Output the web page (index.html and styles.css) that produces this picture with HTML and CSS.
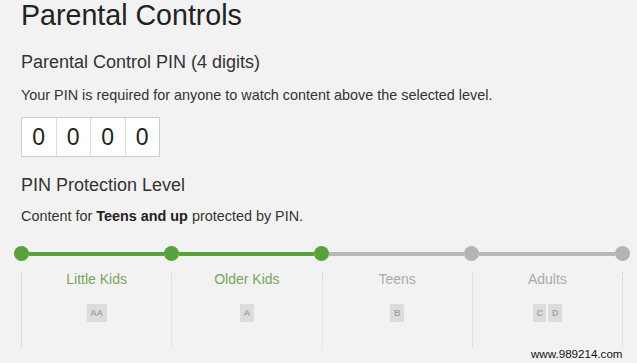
FILE: index.html
```html
<!DOCTYPE html>
<html>
<head>
<meta charset="utf-8">
<link rel="stylesheet" href="styles.css">
</head>
<body>
<div class="page">
  <h1 class="title">Parental Controls</h1>
  <h2 class="subhead first">Parental Control PIN (4 digits)</h2>
  <p class="desc first">Your PIN is required for anyone to watch content above the selected level.</p>
  <div class="pin">
    <div class="cell">0</div>
    <div class="cell">0</div>
    <div class="cell">0</div>
    <div class="cell">0</div>
  </div>
  <h2 class="subhead second">PIN Protection Level</h2>
  <p class="desc second">Content for <b>Teens and up</b> protected by PIN.</p>
  <div class="slider">
    <span class="dot on"></span>
    <span class="seg on"></span>
    <span class="dot on"></span>
    <span class="seg on"></span>
    <span class="dot on"></span>
    <span class="seg"></span>
    <span class="dot"></span>
    <span class="seg"></span>
    <span class="dot"></span>
  </div>
  <div class="levels">
    <div class="level solid on">
      <div class="label">Little Kids</div>
      <div class="badges"><span class="badge">AA</span></div>
    </div>
    <div class="level dotted on">
      <div class="label">Older Kids</div>
      <div class="badges"><span class="badge">A</span></div>
    </div>
    <div class="level dotted">
      <div class="label">Teens</div>
      <div class="badges"><span class="badge">B</span></div>
    </div>
    <div class="level solid last">
      <div class="label">Adults</div>
      <div class="badges"><span class="badge">C</span><span class="badge">D</span></div>
    </div>
  </div>
</div>
<div class="watermark">www.989214.com</div>
</body>
</html>
```
FILE: styles.css
```css
html, body {
  margin: 0;
  padding: 0;
  background: #f2f2f2;
}
body {
  font-family: "Liberation Sans", Arial, sans-serif;
  color: #333;
  position: relative;
  height: 363px;
  overflow: hidden;
}
.page {
  padding-left: 21px;
}
.title {
  margin: 0;
  font-size: 28.6px;
  line-height: 30px;
  font-weight: normal;
  color: #222;
}
.subhead {
  margin: 0;
  font-size: 18px;
  line-height: 22px;
  font-weight: normal;
  color: #333;
}
.subhead.first { margin-top: 21px; }
.subhead.second { margin-top: 17px; }
.desc {
  margin: 0;
  font-size: 14.4px;
  line-height: 17px;
  color: #333;
}
.desc.first { margin-top: 13.5px; }
.desc.second { margin-top: 12px; }
.desc b { color: #222; }
.pin {
  display: flex;
  width: max-content;
  margin-top: 13.5px;
  border: 1px solid #cfcfcf;
  background: #fff;
}
.cell {
  width: 33.5px;
  height: 38px;
  line-height: 38px;
  text-align: center;
  font-size: 23px;
  color: #222;
}
.cell + .cell {
  border-left: 1px solid #dcdcdc;
}
.slider {
  display: flex;
  align-items: center;
  width: 616px;
  margin-left: -7.5px;
  margin-top: 21px;
  height: 15px;
}
.dot {
  width: 15px;
  height: 15px;
  border-radius: 50%;
  background: #b4b4b4;
  flex: none;
}
.dot.on { background: #57a23a; }
.seg {
  flex: 1;
  height: 4px;
  background: #b8b8b8;
}
.seg.on { background: #57a23a; }
.levels {
  display: flex;
  width: 602px;
  margin-top: 11px;
  height: 76px;
}
.level {
  flex: 1;
  text-align: center;
}
.level.solid { border-left: 1px solid #dedede; }
.level.dotted { border-left: 1px dotted #d2d2d2; }
.level.last { border-right: 1px dotted #d2d2d2; }
.label {
  font-size: 14px;
  line-height: 15px;
  color: #aaa;
}
.level.on .label { color: #74a95a; }
.badges {
  display: flex;
  justify-content: center;
  gap: 2px;
  margin-top: 17px;
}
.badge {
  display: inline-block;
  height: 18px;
  line-height: 18px;
  padding: 0 3.5px;
  background: #dcdcdc;
  color: #a5a5a5;
  font-size: 9px;
  font-weight: bold;
}
.watermark {
  position: absolute;
  left: 531px;
  top: 347px;
  font-size: 11.6px;
  line-height: 13px;
  color: #111;
}
```
